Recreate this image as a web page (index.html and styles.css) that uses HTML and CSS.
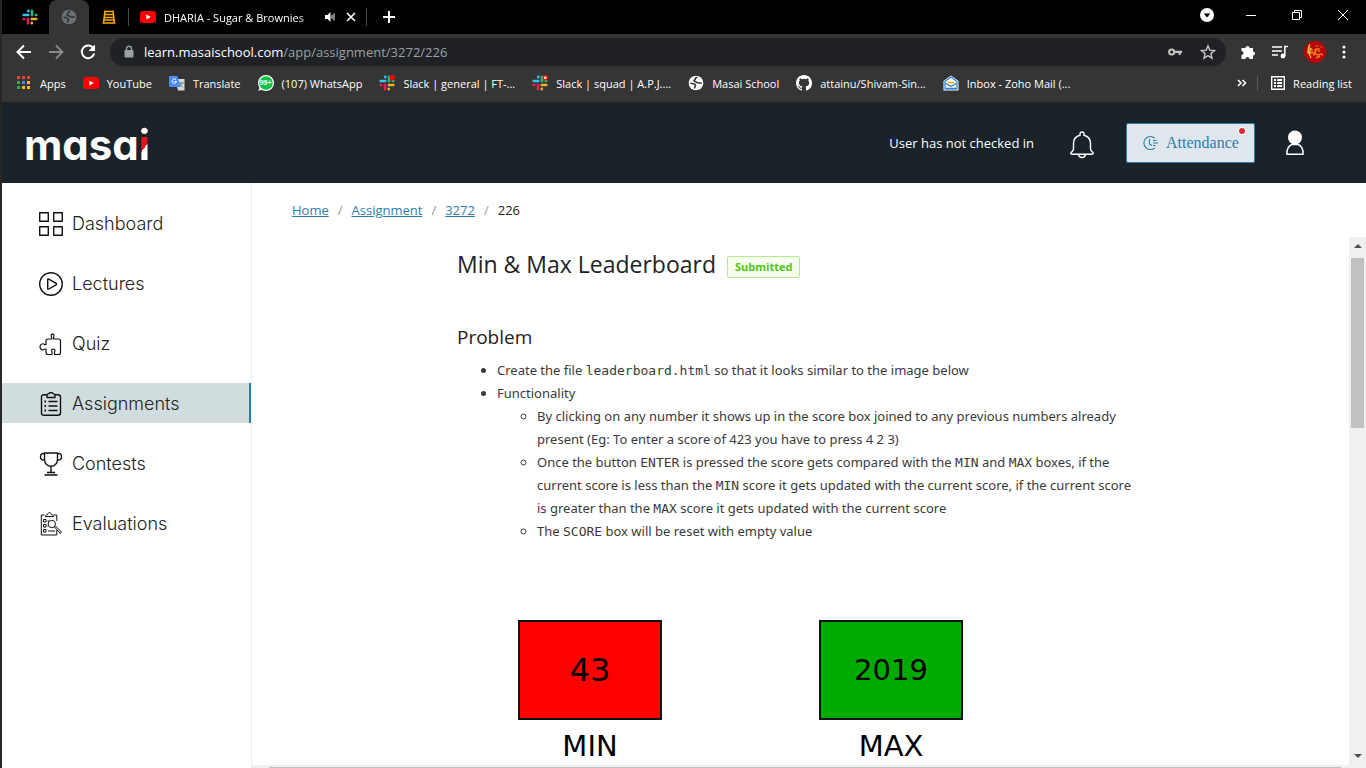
FILE: index.html
```html
<!DOCTYPE html>
<html lang="en">
<head>
<meta charset="utf-8">
<meta name="viewport" content="width=device-width, initial-scale=1">
<title>Min &amp; Max Leaderboard</title>
<link rel="stylesheet" href="styles.css">
</head>
<body>
<svg class="defs" width="0" height="0" aria-hidden="true">
  <symbol id="slack" viewBox="0 0 16 16">
    <g stroke-width="2.600" stroke-linecap="round" fill="none">
      <path d="M1.700 6h4.600M6.300 1.700v.6" stroke="#36c5f0"/>
      <path d="M10 1.700v4.600M14.300 6h-.6" stroke="#2eb67d"/>
      <path d="M9.800 10h4.500M9.800 14.300v-.6" stroke="#ecb22e"/>
      <path d="M6 9.800v4.500M1.700 10h.6" stroke="#e01e5a"/>
    </g>
  </symbol>
  <symbol id="youtube" viewBox="0 0 16 16">
    <rect y="2" width="16" height="12" rx="3" fill="#f00"/>
    <path d="M6.3 5.4v5.2L10.8 8z" fill="#fff"/>
  </symbol>
  <symbol id="globe" viewBox="0 0 16 16">
    <circle cx="8" cy="8" r="7.3" fill="currentColor"/>
    <path d="M9.500 2.300C6 2.500 8.500 4 6.500 5.200c-1 .6-.5 1.300 1 1.500 1.500.3 1.500 1.300 3 1.300h3.300M2.300 8.300l3.200.4c1.500.3 2.200 1 1.700 2.300-.4 1-.2 1.600-1 2.400" fill="none" stroke="var(--land)" stroke-width="1.600"/>
  </symbol>
</svg>
<div class="screen">
  <header class="browser">
    <div class="tabs">
      <button class="tab pinned" aria-label="Slack"><svg class="i16"><use href="#slack"/></svg></button>
      <button class="tab pinned active" aria-label="Masai School"><svg class="i16 globe-dim"><use href="#globe"/></svg></button>
      <button class="tab pinned" aria-label="Ladder"><svg class="i16" viewBox="0 0 16 16" fill="none" stroke="#f9ab00" stroke-width="1.500"><path d="M4 1.500 2.500 14.500M12 1.500l1.500 13M4 2.500h8M3.700 5.500h8.600M3.300 8.500h9.400M3 11h10M1.500 14h13"/></svg></button>
      <div class="tab wide">
        <svg class="i16"><use href="#youtube"/></svg>
        <span class="tab-title">DHARIA - Sugar &amp; Brownies</span>
        <svg class="i12" viewBox="0 0 12 12"><path d="M1 4h2.500L6.500 1v10l-3-3H1z" fill="#fff"/><path d="M8 4v4M10 2.500v7" stroke="#fff" fill="none"/></svg>
        <button class="plain" aria-label="Close tab"><svg class="i10" viewBox="0 0 10 10"><path d="m1 1 8 8M9 1 1 9" stroke="#fff" stroke-width="1.600"/></svg></button>
      </div>
      <button class="plain new-tab" aria-label="New tab"><svg class="i12" viewBox="0 0 12 12"><path d="M6 0v12M0 6h12" stroke="#fff" stroke-width="2"/></svg></button>
      <div class="window-controls">
        <button class="plain" aria-label="Tab search"><svg class="i14" viewBox="0 0 14 14"><circle cx="7" cy="7" r="7" fill="#fff"/><path d="M3.700 5.500h6.600L7 9.500z" fill="#000"/></svg></button>
        <button class="plain" aria-label="Minimize"><svg class="i10" viewBox="0 0 10 10"><path d="M0 5.500h10" stroke="#fff"/></svg></button>
        <button class="plain" aria-label="Restore"><svg class="i10" viewBox="0 0 10 10" fill="none" stroke="#fff"><path d="M.5 2.500h7v7h-7zM2.500 2.500v-2h7v7h-2"/></svg></button>
        <button class="plain" aria-label="Close"><svg class="i10" viewBox="0 0 10 10"><path d="m0 0 10 10M10 0 0 10" stroke="#fff"/></svg></button>
      </div>
    </div>
    <div class="toolbar">
      <button class="plain" aria-label="Back"><svg class="i16" viewBox="0 0 16 16" fill="none" stroke="#fff" stroke-width="2"><path d="M15 8H2M8 1.500 1.500 8 8 14.500"/></svg></button>
      <button class="plain" aria-label="Forward"><svg class="i16" viewBox="0 0 16 16" fill="none" stroke="#8a8a8a" stroke-width="1.800"><path d="M1 8h13M8 1.500 14.500 8 8 14.500"/></svg></button>
      <button class="plain" aria-label="Reload"><svg class="i16" viewBox="0 0 16 16" fill="none" stroke="#fff" stroke-width="2"><path d="M13.500 4.500A6.300 6.300 0 1 0 14.200 9.500"/><path d="M15 .5V7H8.500z" fill="#fff" stroke="none"/></svg></button>
      <div class="address">
        <svg class="lock" viewBox="0 0 10 14"><rect x=".5" y="5" width="9" height="7.500" rx="1" fill="#9aa0a6"/><path d="M2.500 5V3.700a2.500 2.500 0 0 1 5 0V5" fill="none" stroke="#9aa0a6" stroke-width="1.400"/></svg>
        <span class="url"><b>learn.masaischool.com</b>/app/assignment/3272/226</span>
        <button class="plain" aria-label="Passwords"><svg class="i14" viewBox="0 0 14 14" fill="none" stroke="#c4c7c5"><circle cx="3.700" cy="7" r="2.600" stroke-width="2"/><path d="M6.500 6.800H14M11.700 7v3" stroke-width="2.200"/></svg></button>
        <button class="plain" aria-label="Bookmark"><svg class="i16" viewBox="0 0 16 16" fill="none" stroke="#c4c7c5" stroke-width="1.400"><path d="m8 1.800 1.800 4.300 4.700.4-3.600 3.100 1.100 4.600L8 11.700l-4 2.500 1.100-4.600L1.500 6.500l4.700-.4z"/></svg></button>
      </div>
      <button class="plain" aria-label="Extensions"><svg class="i16" viewBox="0 0 16 16"><path d="M1.500 4h4a2 2 0 1 1 4 0H13v3.500a2 2 0 1 1 0 4V15H9.500a2 2 0 0 0-4 0h-4v-4a2 2 0 0 0 0-4z" fill="#fff"/></svg></button>
      <button class="plain" aria-label="Media"><svg class="i16" viewBox="0 0 16 16" fill="none" stroke="#fff" stroke-width="1.500"><path d="M0 3h10M0 7h10M0 11h6M12.800 12V2.500H16"/><circle cx="11" cy="12" r="1.700" fill="#fff"/></svg></button>
      <button class="plain" aria-label="Profile"><svg class="i22" viewBox="0 0 22 22"><circle cx="11" cy="11" r="11" fill="#b80808"/><path d="M6 3.500c-3 3-1 5-2 8 1.500 1 2 3 3 5.500M5 6.500l2 1.500-2 2.500 2 2" fill="none" stroke="#f4b942" stroke-width="1.500"/><path d="M8 8v4h3V8M12 11V8h3v3M9 14l3-1 2 1 3-1 2 1M12 17l4-2" fill="none" stroke="#ef7722" stroke-width="1.400"/><path d="M11 5h4M16 6h3" stroke="#cf5a16"/></svg></button>
      <button class="plain" aria-label="Menu"><svg class="dots" viewBox="0 0 4 14" fill="#fff"><circle cx="2" cy="2" r="1.600"/><circle cx="2" cy="7" r="1.600"/><circle cx="2" cy="12" r="1.600"/></svg></button>
    </div>
    <nav class="bookmarks" aria-label="Bookmarks">
      <a href="#"><svg class="i16" viewBox="0 0 16 16"><path d="M1 1h3v3H1zM6 1h3v3H6zM11 1h3v3h-3z" fill="#ea4335"/><path d="M1 6h3v3H1zM1 11h3v3H1z" fill="#34a853"/><path d="M6 6h3v3H6z" fill="#4285f4"/><path d="M11 6h3v3h-3zM6 11h3v3H6zM11 11h3v3h-3z" fill="#fbbc05"/></svg>Apps</a>
      <a href="#"><svg class="i16"><use href="#youtube"/></svg>YouTube</a>
      <a href="#"><svg class="i16" viewBox="0 0 16 16"><path d="M6 4h9.500v11.500H9z" fill="#d5d7da"/><path d="M0 1h8.500l3 11H1q-1 0-1-1z" fill="#4c8bf5"/><path d="M7 4.700a2.200 2.200 0 1 0 .5 1.800H5.500" fill="none" stroke="#fff"/><path d="M9.500 8H15M12.300 7v1c0 2-1 3.500-2 4M11 9.500l3 3" fill="none" stroke="#607d8b" stroke-width=".9"/></svg>Translate</a>
      <a href="#"><span class="wa"><svg class="i16" viewBox="0 0 16 16"><circle cx="8" cy="8" r="7.400" fill="#0dc143" stroke="#fff" stroke-width="1.200"/><path d="M.3 15.700 1.500 12 4 14.700z" fill="#fff"/></svg><span class="wa-count">99+</span></span>(107) WhatsApp</a>
      <a href="#"><svg class="i16" viewBox="0 0 16 16"><use href="#slack"/><circle cx="13.300" cy="2.700" r="2.700" fill="#f00"/></svg>Slack | general | FT-...</a>
      <a href="#"><svg class="i16" viewBox="0 0 16 16"><use href="#slack"/><circle cx="13.300" cy="2.700" r="2.700" fill="#e11"/><circle cx="13.300" cy="2.700" r="1.200" fill="#fff"/></svg>Slack | squad | A.P.J....</a>
      <a href="#"><svg class="i16 globe-lit"><use href="#globe"/></svg>Masai School</a>
      <a href="#"><svg class="i16" viewBox="0 0 16 16"><path fill="#fff" d="M8 0C3.580 0 0 3.580 0 8c0 3.540 2.290 6.530 5.470 7.590.4.070.55-.17.55-.38v-1.490c-2.010.37-2.530-.49-2.690-.94-.09-.23-.48-.94-.82-1.130-.28-.15-.68-.52-.01-.53.63-.01 1.080.58 1.230.82.72 1.210 1.870.87 2.330.66.07-.52.28-.87.51-1.070-1.780-.2-3.640-.89-3.640-3.950 0-.87.31-1.590.82-2.150-.08-.2-.36-1.020.08-2.120 0 0 .67-.21 2.200.82a7.600 7.600 0 0 1 4 0c1.530-1.040 2.200-.82 2.200-.82.44 1.100.16 1.920.08 2.120.51.56.82 1.270.82 2.150 0 3.070-1.870 3.750-3.650 3.950.29.25.54.73.54 1.480v2.200c0 .21.15.46.55.38A8 8 0 0 0 16 8c0-4.420-3.580-8-8-8"/></svg>attainu/Shivam-Sin...</a>
      <a href="#"><svg class="i16" viewBox="0 0 16 16"><path d="M.5 6 8 .5 15.500 6v9.500H.5z" fill="#fff"/><path d="M2 6.500 8 2l6 4.500v7.500H2z" fill="#fff" stroke="#2f7fd0" stroke-width="1.200"/><path d="M4 6.500h8V9l-4 2-4-2z" fill="#fff3cd"/><path d="M5 7.500h6" stroke="#e9a92b" stroke-width="1.500"/><path d="m2 8 6 3.500L14 8M2.500 13.500h11" fill="none" stroke="#2f7fd0" stroke-width="1.300"/></svg>Inbox - Zoho Mail (...</a>
      <button class="plain more" aria-label="More bookmarks"><svg class="i10" viewBox="0 0 10 10" fill="none" stroke="#fff" stroke-width="1.600"><path d="m1 2 3 3-3 3M5.500 2l3 3-3 3"/></svg></button>
      <a class="reading" href="#"><svg class="i14" viewBox="0 0 14 14" fill="none" stroke="#fff"><path d="M.7.7h12.600v12.600H.7z" stroke-width="1.400"/><path d="M3 4h2M3 7h2M3 10h2M6.200 4H11M6.200 7H11M6.200 10H11" stroke-width="1.800"/></svg>Reading list</a>
    </nav>
  </header>

  <header class="site-header">
    <a class="logo" href="#" aria-label="masai">masa<span class="logo-i">i</span></a>
    <span class="status">User has not checked in</span>
    <button class="plain bell" aria-label="Notifications"><svg viewBox="0 0 24 28" width="24" height="28" fill="none" stroke="#fff" stroke-width="1.400"><path d="M10 4.200V3a2 2 0 0 1 4 0v1.200c4.500 1.100 6.500 4 6.500 8.300V18c0 1.500.8 2 2 3 1.300 1.300.8 2.300-.5 2.300H2C.7 23.300.2 22.300 1.500 21c1.200-1 2-1.500 2-3v-5.500c0-4.300 2-7.200 6.500-8.300zM8.500 23.500c.5 4 6.500 4 7 0"/></svg></button>
    <button class="attendance"><svg class="i16" viewBox="0 0 16 16" fill="none" stroke="#2e7da8" stroke-width="1.100"><path d="M12.800 3.200a6.500 6.500 0 1 0 0 9.600M7.500 4v5l2.500 1.500M11 5.500h3.500M11 8h5M11 10.500h2.500"/></svg>Attendance<i class="alert"></i></button>
    <button class="plain user" aria-label="Account"><svg viewBox="0 0 20 26" width="20" height="26"><path d="M2 24.300c-.7-5 2-9 5-9.800h6c3 .8 5.700 4.800 5 9.800z" fill="none" stroke="#fff" stroke-width="1.500"/><circle cx="10" cy="7.500" r="7" fill="#fff"/></svg></button>
  </header>

  <div class="body">
    <nav class="sidebar" aria-label="Main">
      <a href="#"><svg viewBox="0 0 24 24" class="i24"><path d="M.7.700h8.600v8.600H.7zM14.700.700h8.600v8.600h-8.600zM.7 14.700h8.600v8.600H.7zM14.700 14.700h8.600v8.600h-8.600z"/></svg>Dashboard</a>
      <a href="#"><svg viewBox="0 0 24 24" class="i24"><circle cx="12" cy="12" r="11.300"/><path d="M8.700 7.500v9q.2 1 1.100.5l7.300-4.200q.8-.8 0-1.500L9.800 7.100q-.9-.5-1.100.4z"/></svg>Lectures</a>
      <a href="#"><svg viewBox="0 0 24 24" class="i24 puzzle"><path d="M7 9q0-2 2-2h3.700V5.500c-2.500-4.600 4-4.600 1.800 0V7h5q2 0 2 2v11.500q0 2-2 2h-4V20c2.500-4-5-4-2.500 0v2.500H9q-2 0-2-2V17H5.500c-1 1.500-4.500 1-4.500-2.200 0-3 3.500-3.800 4.500-2.200H7z"/></svg>Quiz</a>
      <a class="current" href="#" aria-current="page"><svg viewBox="0 0 24 24" class="i24"><path d="M5 2.700h3c.5-1 1.500-.700 2-1.200 1-1.300 3-1.300 4 0 .5.500 1.500.2 2 1.200h3q2.500 0 2.500 2.500v15.600q0 2.500-2.500 2.500H5q-2.500 0-2.500-2.500V5.200q0-2.500 2.500-2.500zM8 3v2.500h8V3M9.500 9.500h9M9.500 14h9M9.500 18.500h9"/><path d="M5.500 9.500H7M5.500 14H7M5.500 18.500H7" stroke-width="2"/></svg>Assignments</a>
      <a href="#"><svg viewBox="0 0 24 24" class="i24"><path d="M5.500 1h13v6.500c0 9-13 9-13 0zM5.500 2C3 1 1.500 1.500 1.500 5S4 8 5.800 8M18.500 2c2.500-1 4-.5 4 3s-2.500 3-4.300 3M12 14.500V20M8 20.500h8M5.500 23h13"/></svg>Contests</a>
      <a href="#"><svg viewBox="0 0 24 24" class="i24 thin"><path d="M5.500 3H2.300v20h15.500v-5M14.500 3h3.300v6M6.500 4.500c0-1.500 1-1.500 2-2C9 0 12 0 12.500 2.500c1 .5 2 .5 2 2zM4.500 7.500h2.500V10H4.500zM4.500 12.500h2.500V15H4.500zM4.500 17.500h2.500V20H4.500zM9 19h7M8.500 9H10M8.500 14H9"/><circle cx="12.800" cy="12" r="3.700"/><path d="m15.500 15 6 6.500M16.500 14l6 6-1.500 1.500"/></svg>Evaluations</a>
    </nav>
    <main class="main">
      <nav class="crumbs" aria-label="Breadcrumb"><a href="#">Home</a><i>/</i><a href="#">Assignment</a><i>/</i><a href="#">3272</a><i>/</i><span>226</span></nav>
      <div class="pane">
        <div class="viewport">
          <article class="doc">
            <div class="title-row"><h1>Min &amp; Max Leaderboard</h1><span class="tag">Submitted</span></div>
            <h2>Problem</h2>
            <ul>
              <li>Create the file <code>leaderboard.html</code> so that it looks similar to the image below</li>
              <li>Functionality
                <ul>
                  <li>By clicking on any number it shows up in the score box joined to any previous numbers already present (Eg: To enter a score of 423 you have to press 4 2 3)</li>
                  <li>Once the button <code>ENTER</code> is pressed the score gets compared with the <code>MIN</code> and <code>MAX</code> boxes, if the current score is less than the <code>MIN</code> score it gets updated with the current score, if the current score is greater than the <code>MAX</code> score it gets updated with the current score</li>
                  <li>The <code>SCORE</code> box will be reset with empty value</li>
                </ul>
              </li>
            </ul>
            <div class="boards">
              <figure><div class="score min">43</div><figcaption>MIN</figcaption></figure>
              <figure><div class="score max">2019</div><figcaption>MAX</figcaption></figure>
            </div>
          </article>
        </div>
        <div class="vbar"><span class="arrow up"></span><span class="thumb"></span><span class="arrow down"></span></div>
      </div>
      <div class="hbar"><span></span></div>
    </main>
  </div>
</div>
</body>
</html>
```
FILE: styles.css
```css
* { box-sizing: border-box; }
body { margin: 0; background: #262626; font-family: "Open Sans", "Noto Sans", sans-serif; }
a { color: inherit; text-decoration: none; }
svg { display: block; flex: none; }
.defs { position: absolute; }
.screen { display: flex; flex-direction: column; height: 100vh; margin-left: 2px; overflow: hidden; }
.plain { display: flex; padding: 0; border: 0; background: none; flex: none; }
.i10 { width: 10px; height: 10px; }
.i12 { width: 12px; height: 12px; }
.i14 { width: 14px; height: 14px; }
.i16 { width: 16px; height: 16px; }
.i22 { width: 22px; height: 22px; }
.i24 { width: 24px; height: 24px; }
.globe-dim { color: #6b7075; --land: #353535; }
.globe-lit { color: #fff; --land: #353535; }

/* Browser chrome */
.browser { flex: none; background: #353535; color: #fff; font-size: 11px; border-bottom: 1px solid #252525; }
.tabs { display: flex; height: 34px; padding-left: 8px; background: #000; }
.tab { display: flex; align-items: center; justify-content: center; height: 34px; padding: 0; border: 0; background: none; color: #fff; }
.pinned { width: 39px; }
.pinned.active { width: 40px; background: #353535; border-radius: 8px 8px 0 0; }
.wide { width: 239px; margin: 8px 0; height: 18px; padding: 0 10px 0 11px; gap: 8px; border: solid #4a4a4a; border-width: 0 1px; }
.tab-title { flex: 1; min-width: 0; white-space: nowrap; -webkit-mask-image: linear-gradient(90deg, #000 88%, rgba(0,0,0,.5)); mask-image: linear-gradient(90deg, #000 88%, rgba(0,0,0,.5)); }
.wide .i12 { margin: 0 2px; }
.new-tab { align-self: center; margin-left: 16px; }
.window-controls { display: flex; align-items: center; gap: 36px; margin-left: auto; padding-right: 18px; height: 30px; }
.window-controls .plain:first-child { margin-right: -4px; }
.toolbar { display: flex; align-items: center; gap: 16px; height: 36px; padding: 0 20px 0 14px; }
.address { display: flex; flex: 1; align-items: center; gap: 18px; height: 28px; margin-left: -2px; margin-right: -2px; padding: 0 10px 0 14px; border-radius: 14px; background: #202124; }
.lock { width: 10px; height: 14px; }
.url { flex: 1; margin-left: -8px; font-size: 13px; color: #9aa0a6; }
.url b { font-weight: 400; color: #fff; }
.dots { width: 4px; height: 14px; }
.bookmarks { display: flex; align-items: center; gap: 17px; height: 32px; padding: 0 14px 6px; }
.bookmarks a { display: flex; align-items: center; gap: 8px; white-space: nowrap; }
.wa { position: relative; }
.wa-count { position: absolute; inset: 0; font: 700 7px/16px "Liberation Sans", sans-serif; text-align: center; }
.more { margin-left: auto; }
.bookmarks .reading { margin-left: -7px; padding-left: 13px; border-left: 1px solid #5a5a5a; }

/* Site header */
.site-header { display: flex; flex: none; align-items: center; height: 80px; padding: 0 61px 0 22px; background: #192329; color: #fff; }
.logo { margin-top: 3px; margin-right: auto; font: 700 42px/60px Inter, sans-serif; font-feature-settings: "cv11"; }
.logo-i { color: transparent; background: linear-gradient(#fff 33%, transparent 33%), linear-gradient(127deg, #e0161e 55%, #fff 55%); -webkit-background-clip: text; background-clip: text; }
.status { font-size: 13px; }
.bell { margin: 4px 32px 0 36px; }
.attendance { position: relative; display: flex; align-items: center; gap: 8px; width: 129px; height: 40px; padding: 0 15px; border: 1px solid #2e7da8; border-radius: 2px; background: #dfe7ed; color: #2e7da8; font: 16px "Liberation Serif", serif; }
.alert { position: absolute; top: 4px; right: 9px; width: 6px; height: 6px; border-radius: 50%; background: #dc2f2f; box-shadow: 0 0 0 1px #fff; }
.user { margin-left: 30px; }

/* Body */
.body { display: flex; flex: 1; min-height: 0; background: #fff; color: #222; }
.sidebar { display: flex; flex: none; flex-direction: column; gap: 20px; width: 250px; padding-top: 20px; border-right: 1px solid #ebedf0; }
.sidebar a { display: flex; align-items: center; gap: 9px; height: 40px; padding: 1px 0 0 37px; font: 300 18px/40px Inter, sans-serif; }
.sidebar svg { fill: none; stroke: #111; stroke-width: 1.4; stroke-linejoin: round; }
.sidebar svg.thin { stroke-width: 1; }
.sidebar svg.puzzle { stroke-width: 1.2; }
.sidebar .current { background: #d0dcde; border-right: 2px solid #2e7da8; }
.main { display: flex; flex: 1; flex-direction: column; min-width: 0; }
.crumbs { display: flex; gap: 9px; flex: none; height: 54px; padding: 17px 40px 0; font-size: 13px; line-height: 20px; }
.crumbs a { color: #2e7da8; text-decoration: underline; }
.crumbs i { font-style: normal; color: #999; }
.pane { display: flex; flex: 1; min-height: 0; }
.viewport { flex: 1; min-width: 0; overflow: hidden; }
.doc { max-width: 687px; margin: 0 auto; padding-top: 8px; }
.title-row { display: flex; align-items: center; gap: 11px; }
h1 { margin: 0; font-size: 23px; font-weight: 500; line-height: 38px; }
.tag { margin-top: 6px; padding: 0 7px; border: 1px solid #b7eb8f; border-radius: 2px; background: #f6ffed; color: #52c41a; font-size: 11px; font-weight: 700; line-height: 20px; }
h2 { margin: 40px 0 8px; font-size: 19px; font-weight: 500; line-height: 28px; }
ul { margin: 0; padding-left: 40px; font-family: "Noto Sans", sans-serif; font-size: 13px; line-height: 23px; color: #3a3a3a; }
ul ul { padding-right: 4px; }
code { font-family: "DejaVu Sans Mono", monospace; font-size: 13px; line-height: 1; }
.boards { display: flex; gap: 157px; padding: 77px 0 0 61px; color: #000; font-family: "DejaVu Sans", sans-serif; text-align: center; }
figure { margin: 0; }
.score { display: flex; align-items: center; justify-content: center; width: 144px; height: 100px; border: 2px solid #111; }
.min { background: #f00; font-size: 32px; }
.max { background: #0a0; font-size: 29px; }
figcaption { margin-top: 8px; font-size: 29px; line-height: 36px; }
.vbar { display: flex; flex: none; flex-direction: column; align-items: center; width: 17px; padding: 7px 0; background: #f0f0f0; }
.arrow { border: 4px solid transparent; }
.up { border-bottom-color: #505050; border-top: 0; margin-bottom: 10px; }
.down { border-top-color: #505050; border-bottom: 0; margin-top: auto; }
.thumb { width: 13px; height: 170px; background: #c1c1c1; }
.hbar { flex: none; height: 3px; padding: 2px 25px 0 17px; background: #f0f0f0; }
.hbar span { display: block; height: 1px; background: #c1c1c1; }
```
